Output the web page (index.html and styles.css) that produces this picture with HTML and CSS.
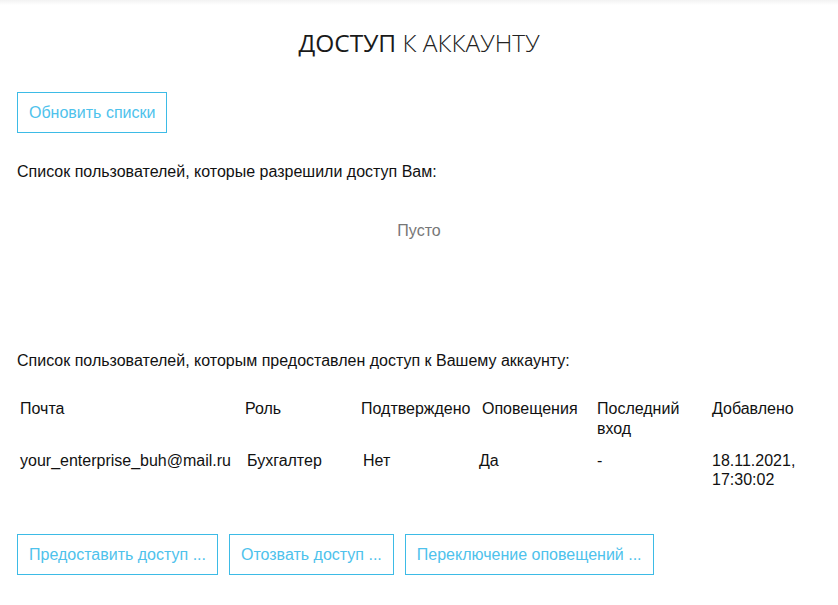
FILE: index.html
```html
<!DOCTYPE html>
<html lang="ru">
<head>
<meta charset="utf-8">
<title>Доступ к аккаунту</title>
<link rel="stylesheet" href="styles.css">
</head>
<body>
<div class="topshade"></div>
<main class="page">
  <h1 class="title"><span class="title-strong">ДОСТУП</span> К АККАУНТУ</h1>
  <div class="actions actions-top">
    <button class="btn">Обновить списки</button>
  </div>
  <p class="caption caption-first">Список пользователей, которые разрешили доступ Вам:</p>
  <div class="empty">Пусто</div>
  <p class="caption caption-second">Список пользователей, которым предоставлен доступ к Вашему аккаунту:</p>
  <table class="users">
    <colgroup>
      <col class="c-mail"><col class="c-role"><col class="c-conf"><col class="c-notif"><col class="c-last"><col class="c-added">
    </colgroup>
    <thead>
      <tr>
        <th>Почта</th>
        <th>Роль</th>
        <th>Подтверждено</th>
        <th>Оповещения</th>
        <th>Последний вход</th>
        <th>Добавлено</th>
      </tr>
    </thead>
    <tbody>
      <tr>
        <td>your_enterprise_buh@mail.ru</td>
        <td class="shift">Бухгалтер</td>
        <td class="shift">Нет</td>
        <td class="back">Да</td>
        <td>-</td>
        <td>18.11.2021, 17:30:02</td>
      </tr>
    </tbody>
  </table>
  <div class="actions actions-bottom">
    <button class="btn">Предоставить доступ ...</button>
    <button class="btn">Отозвать доступ ...</button>
    <button class="btn">Переключение оповещений ...</button>
  </div>
</main>
</body>
</html>
```
FILE: styles.css
```css
* { box-sizing: border-box; }
html, body { margin: 0; padding: 0; background: #fff; }
body {
  font-family: "Liberation Sans", Arial, sans-serif;
  font-size: 16px;
  color: #111;
}
.topshade {
  height: 5px;
  background: linear-gradient(#f2f2f2, #ffffff);
}
.page {
  padding: 22px 17px 0 17px;
}
.title {
  margin: 0;
  text-align: center;
  font-family: "Open Sans", sans-serif;
  font-weight: 300;
  font-size: 24.5px;
  line-height: 32px;
  color: #222;
}
.title-strong { font-weight: 500; color: #1a1a1a; }
.actions { display: flex; gap: 11px; }
.actions-top { margin-top: 33px; }
.btn {
  font-family: "Liberation Sans", Arial, sans-serif;
  font-size: 16px;
  line-height: 18px;
  color: #4ec2ec;
  background: #fff;
  border: 1px solid #3dbbe6;
  border-radius: 0;
  padding: 10px 11px;
  height: 41px;
  cursor: pointer;
}
.caption {
  margin: 0;
  line-height: 20px;
}
.caption-first { margin-top: 29px; }
.empty {
  margin-top: 39px;
  text-align: center;
  color: #777;
  line-height: 20px;
}
.caption-second { margin-top: 110px; }
.users {
  margin-top: 22px;
  border-collapse: collapse;
  table-layout: fixed;
  width: 803px;
}
.c-mail { width: 225px; }
.c-role { width: 116px; }
.c-conf { width: 121px; }
.c-notif { width: 115px; }
.c-last { width: 115px; }
.c-added { width: 111px; }
.users th, .users td {
  text-align: left;
  vertical-align: top;
  padding: 6px 3px;
  line-height: 20px;
  font-size: 16px;
}
.users th { font-weight: normal; }
.users td { line-height: 19px; }
.users td.shift { padding-left: 5px; }
.users td.back { padding-left: 0; }
.actions-bottom { margin-top: 39px; }
```
